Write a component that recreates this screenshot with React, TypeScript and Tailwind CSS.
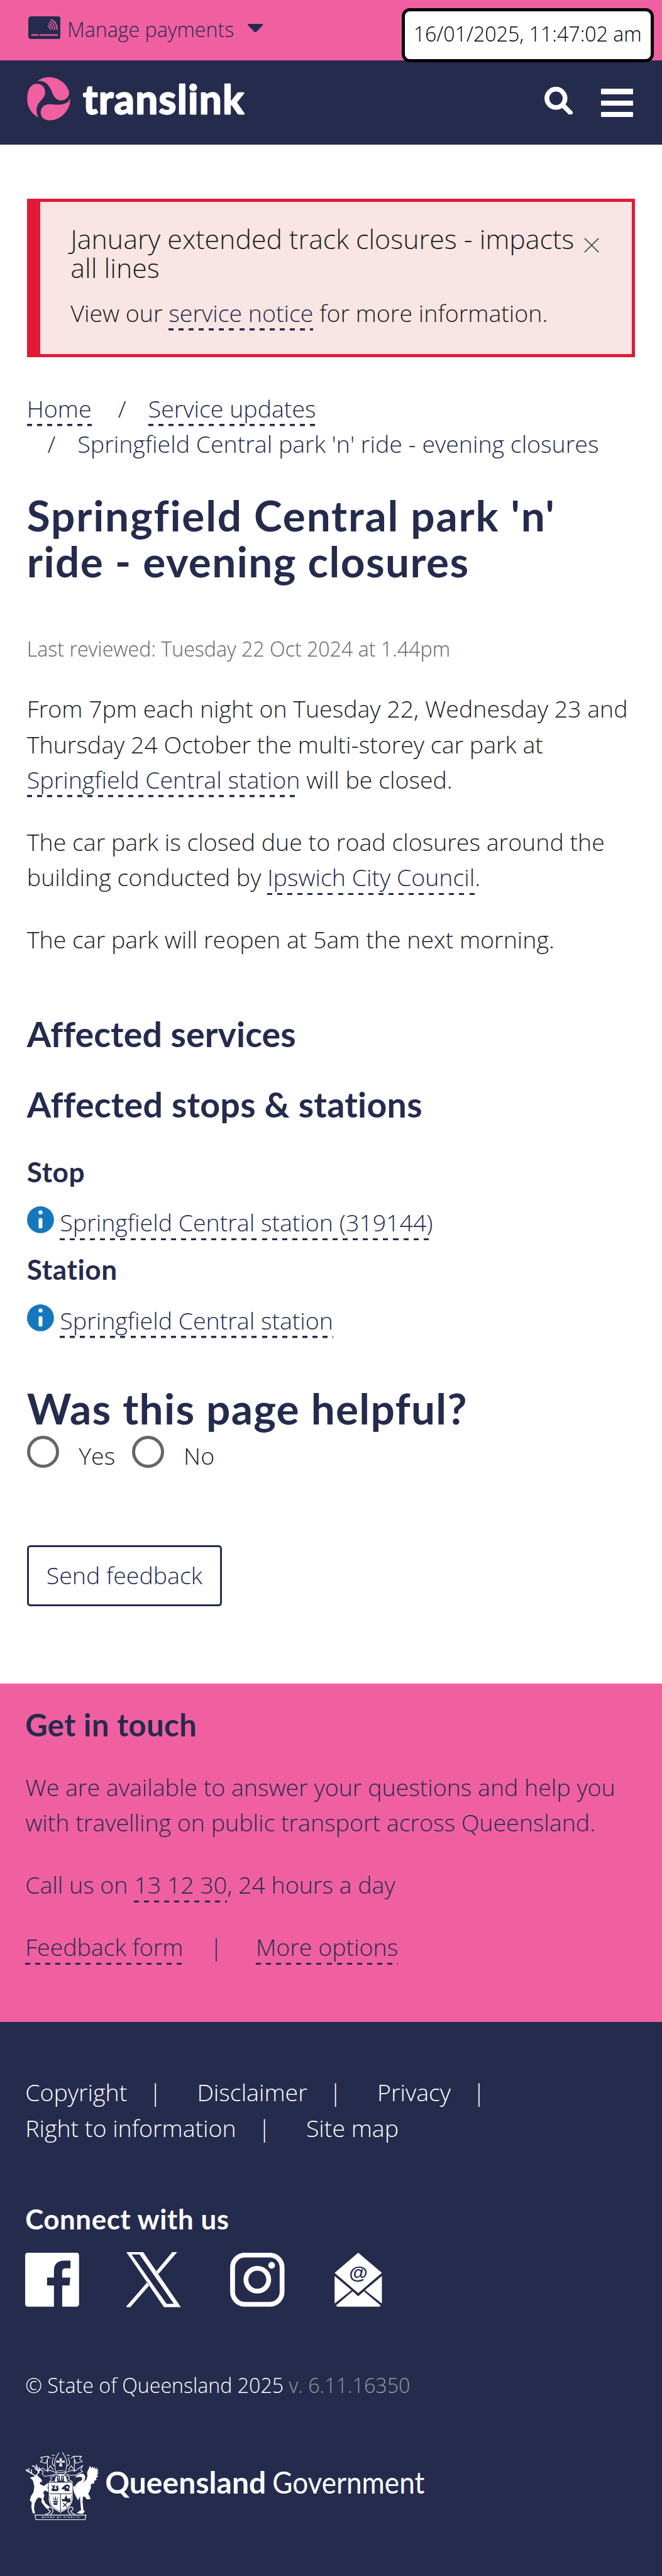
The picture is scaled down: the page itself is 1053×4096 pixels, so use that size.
import type { ReactNode } from "react";

const NAVY = "#252b4d";
const PINK = "#f060a1";

function A({ children }: { children: ReactNode }) {
  return (
    <a
      href="#"
      className="bg-[repeating-linear-gradient(90deg,#252b4d_0_0.1875rem,transparent_0.1875rem_0.375rem)] bg-[length:100%_3.5px] bg-left-bottom bg-no-repeat pb-[3px] text-[#252b4d]"
    >
      {children}
    </a>
  );
}

function CardIcon() {
  return (
    <svg viewBox="149 87 174 122" className="mt-[0.604rem] h-[0.847rem] w-[1.208rem] shrink-0">
      <rect x="149" y="87" width="174" height="122" rx="15" fill={NAVY} />
      <g fill="none" stroke={PINK} strokeWidth="6" strokeLinecap="round">
        <path d="M168 186.5H201M212 186.5H305" strokeWidth="7" />
        <path d="M255 139Q266 144 267 156M259 127Q278 134 279 156M265 116Q290 125 291 156M271 105Q302 116 303 156" />
      </g>
    </svg>
  );
}

function TranslinkLogo() {
  return (
    <svg viewBox="140 405 1175 245" className="h-[1.701rem] w-[8.16rem] overflow-visible">
      <g fill={PINK}>
        <path d="M198 430C222 415 242 411 262 411C310 411 352 443 367 485C372 512 355 534 325 535C298 535 285 512 276 488C262 455 245 428 198 430Z" />
        <path d="M205 628C165 605 144 570 144 527C144 500 150 480 158 467C170 449 185 446 197 446C225 446 240 468 240 492C240 530 192 540 194 592C195 606 200 618 205 628Z" />
        <path d="M374 521C378 585 325 642 262 642C232 641 216 620 216 600C216 572 236 555 262 555C290 555 315 562 340 554C360 547 370 538 374 521Z" />
      </g>
      <text
        x="442"
        y="607"
        textLength="860"
        fill="#fff"
        stroke="#fff"
        strokeWidth="8"
        strokeLinejoin="round"
        className="font-[Lato] text-[212px] font-bold"
      >
        translink
      </text>
    </svg>
  );
}

function InfoIcon() {
  return (
    <svg viewBox="0 0 48 48" className="mt-[0.05rem] mr-[0.225rem] size-4 shrink-0">
      <circle cx="24" cy="24" r="24" fill="#1578be" />
      <circle cx="24" cy="10.8" r="3.6" fill="#fff" />
      <rect x="20.6" y="21" width="6.8" height="18.5" rx="3.2" fill="#fff" />
    </svg>
  );
}

function Crest() {
  return (
    <svg viewBox="25 25 395 373" className="h-[2.59rem] w-[2.743rem] shrink-0">
      <g fill="#fff">
        {/* stag */}
        <path d="M50 168L72 163L84 152L96 162L112 178L116 190L102 194L108 206L126 212L146 196L158 192L156 206L144 222L154 236L152 246L128 236L122 250L128 262L122 282L134 306L156 324L146 336L136 330L112 300L114 280L98 274L86 284L76 306L72 332L78 358L66 360L58 326L60 300L50 290L56 268L70 244L74 216L68 190L64 180Z" />
        {/* brolga */}
        <path d="M372 104L378 118L386 108L390 120L398 110L400 124L410 112L408 128L418 124L410 142L418 142L408 156L416 160L402 172L408 178L392 188L396 196L376 204L376 224L362 256L370 268L374 284L354 284L346 272L334 268L332 296L336 340L344 350L330 362L300 358L318 344L324 342L320 300L318 268L308 290L298 272L288 252L280 226L272 208L290 216L300 200L312 190L328 182L330 168L318 164L290 168L304 156L318 148L336 148L346 160L344 178L334 196L352 178L358 160L356 140Z" />
        {/* helm */}
        <path d="M182 188L190 160L208 150H226L242 160L252 188L240 192L232 184H200L192 192Z" />
      </g>
      <g fill={NAVY}>
        <rect x="195" y="158" width="15" height="27" rx="5" />
        <rect x="217" y="158" width="15" height="27" rx="5" />
      </g>
      <g fill="none" stroke="#fff" strokeWidth="3.5">
        <path d="M202 160V182M196 168H208M224 160V182M218 168H230" strokeWidth="2.5" />
        <path d="M189 142H241L236 152H194ZM190 136Q215 126 240 136" />
        <path d="M190 136Q180 110 184 74L196 50L206 34M240 136Q250 110 246 74L234 50L224 32M184 50L166 48M246 48L264 50M176 60Q166 84 172 98L186 108M254 60Q266 84 260 98L246 108" />
        <path d="M162 66L146 54L108 60L118 72L106 84L136 92L144 74V132L160 104L176 128M136 92L150 56" />
        <path d="M268 66L284 54L326 54L316 68L330 82L296 92L288 74V132L272 104L256 128M296 92L284 56" />
        <path d="M192 142L160 130L140 132L118 118L106 126L122 134L116 148L130 162L160 156L190 150M238 142L270 130L292 132L332 104L322 126L332 136L310 146L300 154L270 156L242 150" />
        <path d="M186 156L160 166L166 176L156 190L180 188M246 156L262 166L256 176L278 190L252 190" />
      </g>
      <path d="M215 66L222 62L220 74L226 80L236 74V90L226 86L220 92L224 108H206L210 92L204 86L192 90V74L204 80L210 74L208 62Z" fill="#fff" />
      <path d="M206 78L224 94M224 78L206 94" stroke={NAVY} strokeWidth="3" />
      {/* antlers */}
      <path d="M84 160L60 146L38 134L28 128M60 146L58 124M46 138L44 118M38 134L34 122M86 158L96 138L88 116L62 104M94 132L76 118M92 124L84 98M96 138L108 120M98 144L100 112" fill="none" stroke="#fff" strokeWidth="5" />
      {/* shield */}
      <path d="M149 193H280V268Q284 304 256 330Q240 344 214 357Q188 344 172 330Q144 304 150 268Z" fill="#fff" stroke={NAVY} strokeWidth="3" />
      <path d="M156 254H274M214 254V352" stroke={NAVY} strokeWidth="3.5" />
      <path d="M156 264Q152 302 176 324Q190 338 214 348Q240 338 254 324Q276 302 272 264" fill="none" stroke={NAVY} strokeWidth="2" />
      <g fill={NAVY}>
        <path d="M162 206L174 212L184 206L182 218L200 210L204 234L196 240H170L164 232L174 222Z" />
        <path d="M220 224L234 212Q244 200 260 208Q268 218 258 228L264 240H238L234 230L222 232Z" />
        <path d="M174 266L181 288H176ZM187 262L191 288H183ZM200 266L197 288H192ZM174 292H200L196 314H178Z" />
        <path d="M244 260L252 282L264 276L268 296L254 304Q240 290 224 296L220 282L234 284Z" />
      </g>
      <circle cx="187" cy="224" r="6" fill="#fff" />
      <circle cx="250" cy="220" r="6" fill="#fff" />
      <path d="M176 302H198" stroke="#fff" strokeWidth="3" />
      <path d="M228 304L248 324M248 304L228 324" stroke={NAVY} strokeWidth="5" />
      {/* motto scroll */}
      <g fill="none" stroke="#fff">
        <path d="M77 368H350L345 393H83Z" strokeWidth="4" />
        <path d="M130 366Q152 362 160 348Q144 340 148 330Q156 322 168 330Q180 344 168 358L160 366M296 366Q278 362 268 348Q284 340 280 330Q272 322 260 330Q248 344 260 358L268 366" strokeWidth="4" />
      </g>
      <text x="114" y="386" textLength="200" fill="#fff" className="font-['Liberation_Sans'] text-[14px]">
        AUDAX AT FIDELIS
      </text>
    </svg>
  );
}

function QueenslandGovernment() {
  return (
    <svg viewBox="0 0 570 60" className="ml-[0.229rem] h-5 w-[11.875rem] overflow-visible">
      <text x="-1" y="45" textLength="287" lengthAdjust="spacingAndGlyphs" fill="#fff" className="font-[Lato] text-[54px] font-bold">
        Queensland
      </text>
      <text x="297" y="45" textLength="271" lengthAdjust="spacingAndGlyphs" fill="#fff" className="font-[Lato] text-[54px] font-normal">
        Government
      </text>
    </svg>
  );
}

function Facebook() {
  return (
    <svg viewBox="0 0 96 96" className="size-8">
      <path
        fill="#fff"
        fillRule="evenodd"
        d="M5 0H91Q96 0 96 5V91Q96 96 91 96H66V58.3H79L80.4 44.3H66V34C66 29.5 68 27.7 73 27.7H80.8V14H70C58 14 51.3 20 51.3 32V44.3H39V58.3H51.3V96H5Q0 96 0 91V5Q0 0 5 0Z"
      />
    </svg>
  );
}

function XLogo() {
  return (
    <svg viewBox="0 0 97 98" className="-mt-[0.02rem] h-[2.042rem] w-[2.021rem]">
      <path
        fill="#fff"
        fillRule="evenodd"
        d="M0 0H30L97 98H67ZM9.3 4.2L71.5 92H84.5L23.6 4.2ZM81.7 0H90.5L56.6 39.6L53 34.4ZM0 98H7L41 59L37.4 53.6L0 96.5Z"
      />
    </svg>
  );
}

function Instagram() {
  return (
    <svg viewBox="0 0 97 96" className="h-8 w-[2.021rem]">
      <rect x="4.4" y="4.2" width="88.2" height="87.6" rx="22" fill="none" stroke="#fff" strokeWidth="8.6" />
      <circle cx="48.5" cy="48" r="20.3" fill="none" stroke="#fff" strokeWidth="8.6" />
      <circle cx="74" cy="22.3" r="6" fill="#fff" />
    </svg>
  );
}

function Mail() {
  return (
    <svg viewBox="0 0 85 96" className="h-8 w-[1.77rem]">
      <g fill="#fff">
        <path d="M42.3 0L84.5 35.8L42.3 72L0.3 35.8Z" />
        <path d="M0.3 41.5L30.3 66.5L0.3 90.5ZM84.5 41.5L54.3 66.5L84.5 90.5Z" />
        <path d="M32.4 68.5L42.3 77.5L52.4 68.5L82.5 94L80 96H5L2.5 94Z" />
      </g>
      <text x="42.5" y="47" textAnchor="middle" fill={NAVY} className="font-['Liberation_Sans'] text-[34px] font-bold">
        @
      </text>
    </svg>
  );
}

function Radio({ label }: { label: string }) {
  return (
    <label className="flex items-start">
      <span className="size-[1.1875rem] rounded-full border-[5px] border-[#666]" />
      <span className="mt-[0.08rem] ml-[0.735rem] text-[#1d1d1f]">{label}</span>
    </label>
  );
}

function Bar() {
  return <span className="mr-[1.31rem] ml-[0.81rem]">|</span>;
}

export default function App() {
  return (
    <div className="relative flex h-[4096px] w-[1053px] flex-col overflow-hidden bg-white font-['Open_Sans',sans-serif] text-sm leading-[1.3125rem] font-light text-[#1d1d1f]">
      <style>{"html{font-size:42.868px}"}</style>

      <div className="flex h-9 shrink-0 items-start bg-[#f060a1] pl-[1.04rem] text-[#252b4d]">
        <CardIcon />
        <span className="mt-[0.545rem] ml-[0.25rem] text-xs leading-[1.125rem]">Manage payments</span>
        <svg viewBox="1323 126 82 47" className="mt-[0.875rem] ml-[0.52rem] h-[0.326rem] w-[0.569rem]">
          <path d="M1328 126H1400Q1408 129 1402 135L1369 169Q1364 174 1359 169L1326 135Q1320 129 1328 126Z" fill={NAVY} />
        </svg>
      </div>
      <time className="absolute top-[0.3125rem] left-[14.9rem] flex h-8 w-[9.354rem] items-center justify-center rounded-[0.3rem] border-[5px] border-black bg-white pb-0.25 text-xs whitespace-nowrap text-black">
        16/01/2025, 11:47:02 am
      </time>

      <header className="flex h-12.5 shrink-0 items-start bg-[#252b4d] pl-[0.972rem]">
        <div className="mt-[0.575rem]">
          <TranslinkLogo />
        </div>
        <svg viewBox="0 0 50 50" className="mt-[0.96rem] ml-[11.08rem] size-[1.042rem]">
          <circle cx="20.5" cy="20.5" r="16.2" fill="none" stroke="#fff" strokeWidth="8.4" />
          <path d="M33 33L46 46" stroke="#fff" strokeWidth="8.4" strokeLinecap="round" />
        </svg>
        <div className="mt-[1.05rem] ml-[1.045rem] flex w-[1.1875rem] flex-col gap-[0.225rem]">
          <span className="h-[0.2rem] rounded-[1px] bg-white" />
          <span className="h-[0.2rem] rounded-[1px] bg-white" />
          <span className="h-[0.2rem] rounded-[1px] bg-white" />
        </div>
      </header>

      <main className="flex flex-col px-4 pb-[2.875rem]">
        <section className="mt-8 flex h-23.5 items-start justify-between border-[5px] border-l-[21px] border-[#e31937] bg-[#f9e5e3] pt-[0.84rem] pr-[1.22rem] pl-[1.13rem]">
          <div>
            <h2 className="text-base leading-[1.0625rem] whitespace-nowrap">
              January extended track closures - impacts
              <br />
              all lines
            </h2>
            <p className="mt-2">
              View our <A>service notice</A> for more information.
            </p>
          </div>
          <svg viewBox="0 0 27 30" className="mt-[0.48rem] h-[0.625rem] w-[0.5625rem]">
            <path d="M1 4L26 29M26 4L1 29" stroke="#fff" strokeWidth="2.2" />
            <path d="M1 1L26 26M26 1L1 26" stroke="#5f5f5f" strokeWidth="2.4" />
          </svg>
        </section>

        <nav className="mt-5 text-[#252b4d]">
          <div>
            <A>Home</A>
            <span className="mr-[0.82rem] ml-[0.985rem]">/</span>
            <A>Service updates</A>
          </div>
          <div>
            <span className="mr-[0.82rem] ml-[0.76rem]">/</span>
            Springfield Central park 'n' ride - evening closures
          </div>
        </nav>

        <h1 className="mt-[1.15rem] font-[Lato] text-[1.575rem] leading-[1.6875rem] font-bold tracking-[1.8px] text-[#252b4d]">
          Springfield Central park 'n'
          <br />
          <span className="tracking-[1.4px]">ride - evening closures</span>
        </h1>
        <p className="mt-[1.869rem] text-xs leading-[1.125rem] text-[#666]">Last reviewed: Tuesday 22 Oct 2024 at 1.44pm</p>
        <p className="mt-4 whitespace-nowrap">
          From 7pm each night on Tuesday 22, Wednesday 23 and
          <br />
          Thursday 24 October the multi-storey car park at
          <br />
          <A>Springfield Central station</A> will be closed.
        </p>
        <p className="mt-4 whitespace-nowrap">
          The car park is closed due to road closures around the
          <br />
          building conducted by <A>Ipswich City Council</A>.
        </p>
        <p className="mt-4">The car park will reopen at 5am the next morning.</p>

        <h2 className="mt-[2.09rem] font-[Lato] text-[1.295rem] leading-6 font-bold tracking-[0.1px] text-[#252b4d]">Affected services</h2>
        <h2 className="mt-[1.12rem] font-[Lato] text-[1.295rem] leading-6 font-bold tracking-[0.25px] text-[#252b4d]">
          Affected stops &amp; stations
        </h2>

        <h3 className="mt-[1.095rem] font-[Lato] text-[1.03rem] leading-5 font-bold tracking-[0.6px] text-[#252b4d]">Stop</h3>
        <div className="mt-[0.626rem] flex items-start">
          <InfoIcon />
          <span>
            <A>Springfield Central station (319144)</A>
          </span>
        </div>
        <h3 className="mt-[0.43rem] font-[Lato] text-[1.03rem] leading-5 font-bold tracking-[0.6px] text-[#252b4d]">Station</h3>
        <div className="mt-[0.636rem] flex items-start">
          <InfoIcon />
          <span>
            <A>Springfield Central station</A>
          </span>
        </div>

        <h2 className="mt-[1.76rem] font-[Lato] text-[1.575rem] leading-[1.6875rem] font-bold tracking-[1.3px] text-[#252b4d]">
          Was this page helpful?
        </h2>
        <div className="mt-[0.174rem] flex h-5.5 items-start gap-[0.62rem]">
          <Radio label="Yes" />
          <Radio label="No" />
        </div>
        <button className="mt-[2.69rem] flex h-9 w-[7.229rem] items-center justify-center rounded-[0.12rem] border-[3px] border-[#252b4d] text-[#252b4d]">
          Send feedback
        </button>
      </main>

      <section className="bg-[#f060a1] pt-[0.84rem] pb-[2.12rem] pl-[0.9375rem] text-[#252b4d]">
        <h2 className="font-[Lato] text-[1.145rem] leading-5.5 font-bold tracking-[0.35px]">Get in touch</h2>
        <p className="mt-[0.973rem] whitespace-nowrap">
          We are available to answer your questions and help you
          <br />
          with travelling on public transport across Queensland.
        </p>
        <p className="mt-4">
          Call us on <A>13 12 30</A>, 24 hours a day
        </p>
        <p className="mt-4">
          <A>Feedback form</A>
          <span className="mr-[1.23rem] ml-[0.99rem]">|</span>
          <A>More options</A>
        </p>
      </section>

      <footer className="flex grow flex-col bg-[#252b4d] pt-[1.96rem] pl-[0.9375rem] text-white">
        <p className="whitespace-nowrap">
          Copyright
          <Bar />
          Disclaimer
          <Bar />
          Privacy
          <Bar />
          <br />
          Right to information
          <Bar />
          Site map
        </p>
        <h3 className="mt-[2.106rem] font-[Lato] text-[1.022rem] leading-5 font-bold tracking-[0.6px]">Connect with us</h3>
        <div className="mt-[0.62rem] flex h-8 items-start">
          <Facebook />
          <div className="ml-[1.75rem]">
            <XLogo />
          </div>
          <div className="ml-[1.83rem]">
            <Instagram />
          </div>
          <div className="ml-[1.86rem]">
            <Mail />
          </div>
        </div>
        <p className="mt-[2.35rem] text-xs leading-[1.125rem]">
          © State of Queensland 2025 <span className="text-[#999]">v. 6.11.16350</span>
        </p>
        <div className="mt-[1.86rem] flex items-center">
          <Crest />
          <QueenslandGovernment />
        </div>
      </footer>
    </div>
  );
}
